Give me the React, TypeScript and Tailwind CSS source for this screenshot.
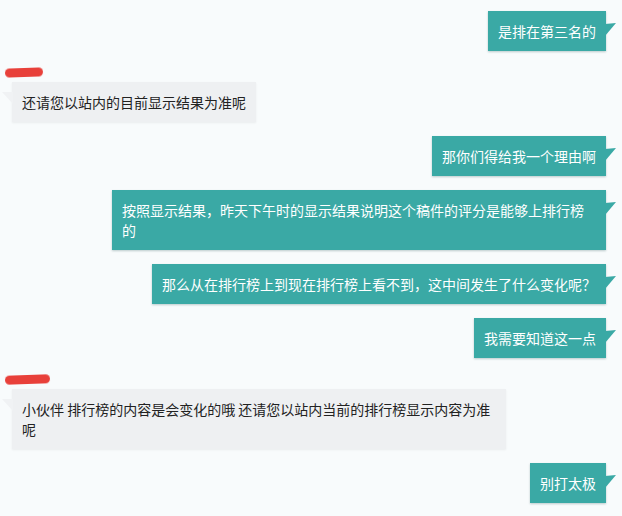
import React from "react";

type Msg =
  | { side: "right"; text: string }
  | { side: "left"; text: string; blob: number };

const messages: Msg[] = [
  { side: "right", text: "是排在第三名的" },
  { side: "left", text: "还请您以站内的目前显示结果为准呢", blob: 38 },
  { side: "right", text: "那你们得给我一个理由啊" },
  {
    side: "right",
    text: "按照显示结果，昨天下午时的显示结果说明这个稿件的评分是能够上排行榜的",
  },
  {
    side: "right",
    text: "那么从在排行榜上到现在排行榜上看不到，这中间发生了什么变化呢？",
  },
  { side: "right", text: "我需要知道这一点" },
  {
    side: "left",
    text: "小伙伴 排行榜的内容是会变化的哦 还请您以站内当前的排行榜显示内容为准呢",
    blob: 45,
  },
  { side: "right", text: "别打太极" },
];

function RightBubble({ text }: { text: string }) {
  return (
    <div className="flex justify-end pr-[16px]">
      <div className="relative max-w-[494px] bg-[#3aa9a5] text-white px-[10px] py-[10px] text-[14px] leading-[20px] shadow-[0_1px_2px_rgba(0,60,60,0.25)]">
        {text}
        <svg
          className="absolute right-[-11px] top-[12px]"
          width="12"
          height="14"
          viewBox="0 0 12 14"
        >
          <polygon points="0,1 11,0 0,13" fill="#3aa9a5" />
        </svg>
      </div>
    </div>
  );
}

function LeftBubble({ text, blob }: { text: string; blob: number }) {
  return (
    <div className="flex flex-col items-start pl-[12px]">
      <div className="h-[12px] w-full relative">
        <div
          className="absolute top-[3px] left-[-7px] h-[9px] rounded-full bg-[#e8403a] -rotate-2 blur-[0.5px]"
          style={{ width: blob }}
        />
      </div>
      <div className="relative mt-[5px] max-w-[494px] bg-[#eef0f2] text-[#222222] px-[10px] py-[10px] text-[14px] leading-[20px] shadow-[0_1px_2px_rgba(0,0,0,0.06)]">
        {text}
        <svg
          className="absolute left-[-10px] top-[10px]"
          width="11"
          height="14"
          viewBox="0 0 11 14"
        >
          <polygon points="11,0 0,0 11,12" fill="#f0f2f4" />
        </svg>
      </div>
    </div>
  );
}

export default function App() {
  return (
    <div
      className="w-[622px] h-[516px] overflow-hidden bg-[#f8fbfc] pt-[11px] flex flex-col gap-[14px]"
      style={{ fontFamily: '"Noto Sans CJK SC", "Noto Sans", sans-serif' }}
    >
      {messages.map((m, i) =>
        m.side === "right" ? (
          <RightBubble key={i} text={m.text} />
        ) : (
          <LeftBubble key={i} text={m.text} blob={m.blob} />
        )
      )}
    </div>
  );
}
